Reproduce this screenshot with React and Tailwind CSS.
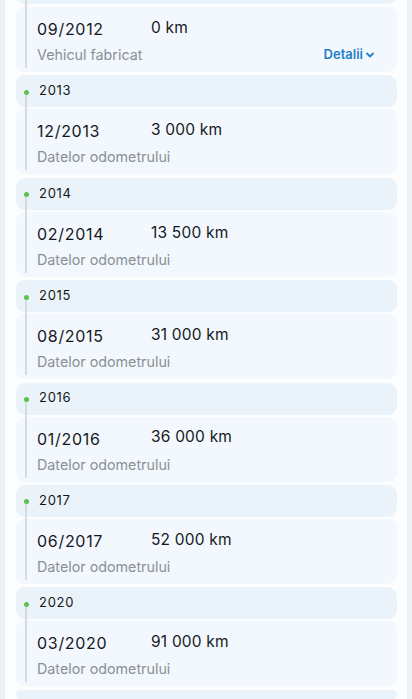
import React from 'react';

const years = [
  { year: '2013', date: '12/2013', km: '3 000 km' },
  { year: '2014', date: '02/2014', km: '13 500 km' },
  { year: '2015', date: '08/2015', km: '31 000 km' },
  { year: '2016', date: '01/2016', km: '36 000 km' },
  { year: '2017', date: '06/2017', km: '52 000 km' },
  { year: '2020', date: '03/2020', km: '91 000 km' },
];

function Item({ date, km, label, details }) {
  return (
    <div className="h-[65px] rounded-[9px] bg-[#f2f8fd] pl-[21px] pr-[22px] pt-[10px] flex flex-col">
      <div className="flex items-center">
        <span className="w-[114px] text-[16px] tracking-[0.7px] text-[#16181b]">{date}</span>
        <span className="text-[15.5px] tracking-[0.2px] text-[#16181b] -mt-[3px]">{km}</span>
      </div>
      <div className="flex items-center justify-between mt-[3px]">
        <span className="text-[14.3px] text-[#8b9095]">{label}</span>
        {details && (
          <span className="flex items-center gap-[2px] text-[13px] font-semibold text-[#1f80c8]">
            Detalii
            <svg width="10" height="10" viewBox="0 0 10 10" fill="none">
              <path d="M2 3.5 L5 6.5 L8 3.5" stroke="#1f80c8" strokeWidth="1.8" strokeLinecap="round" strokeLinejoin="round" />
            </svg>
          </span>
        )}
      </div>
    </div>
  );
}

function YearBlock({ year, date, km }) {
  return (
    <div className="relative flex flex-col gap-[2px]">
      <div className="absolute left-[9px] top-[16px] bottom-[4px] w-[1.5px] bg-[#d3dbe3]" />
      <div className="h-[32px] rounded-[9px] bg-[#ebf3fa] flex items-center pl-[8px]">
        <span className="relative w-[5px] h-[5px] rounded-full bg-[#5bc24b] mt-[2px]" />
        <span className="ml-[10px] text-[13px] tracking-[0.7px] text-[#141618] -mt-[1px]">{year}</span>
      </div>
      <Item date={date} km={km} label="Datelor odometrului" />
    </div>
  );
}

export default function App() {
  return (
    <div className="h-[699px] overflow-hidden bg-[#eef1f4] px-[5px]" style={{ fontFamily: 'Inter, "Noto Sans", sans-serif' }}>
      <div className="h-full bg-[#fbfdff] pl-[11px] pr-[10px] flex flex-col gap-[3.4px]">
        <div className="relative flex flex-col gap-[3px] -mt-[60px]">
          <div className="absolute left-[9px] top-0 bottom-[4px] w-[1.5px] bg-[#d3dbe3]" />
          <div className="h-[64px] rounded-[9px] bg-[#ebf3fa]" />
          <Item date="09/2012" km="0 km" label="Vehicul fabricat" details />
        </div>
        {years.map((y) => (
          <YearBlock key={y.year} {...y} />
        ))}
        <div className="h-[32px] rounded-[9px] bg-[#ebf3fa]" />
      </div>
    </div>
  );
}
